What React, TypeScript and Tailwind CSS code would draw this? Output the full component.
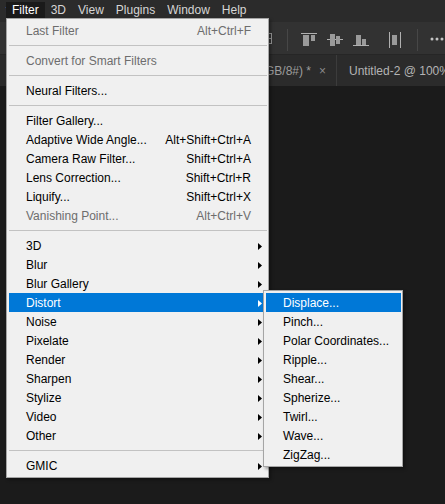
import React from "react";

type Row = {
  label: string;
  shortcut?: string;
  disabled?: boolean;
  sub?: boolean;
  active?: boolean;
};

type Entry = Row | "sep";

const filterMenu: Entry[] = [
  { label: "Last Filter", shortcut: "Alt+Ctrl+F", disabled: true },
  "sep",
  { label: "Convert for Smart Filters", disabled: true },
  "sep",
  { label: "Neural Filters..." },
  "sep",
  { label: "Filter Gallery..." },
  { label: "Adaptive Wide Angle...", shortcut: "Alt+Shift+Ctrl+A" },
  { label: "Camera Raw Filter...", shortcut: "Shift+Ctrl+A" },
  { label: "Lens Correction...", shortcut: "Shift+Ctrl+R" },
  { label: "Liquify...", shortcut: "Shift+Ctrl+X" },
  { label: "Vanishing Point...", shortcut: "Alt+Ctrl+V", disabled: true },
  "sep",
  { label: "3D", sub: true },
  { label: "Blur", sub: true },
  { label: "Blur Gallery", sub: true },
  { label: "Distort", sub: true, active: true },
  { label: "Noise", sub: true },
  { label: "Pixelate", sub: true },
  { label: "Render", sub: true },
  { label: "Sharpen", sub: true },
  { label: "Stylize", sub: true },
  { label: "Video", sub: true },
  { label: "Other", sub: true },
  "sep",
  { label: "GMIC", sub: true },
];

const distortMenu: Row[] = [
  { label: "Displace...", active: true },
  { label: "Pinch..." },
  { label: "Polar Coordinates..." },
  { label: "Ripple..." },
  { label: "Shear..." },
  { label: "Spherize..." },
  { label: "Twirl..." },
  { label: "Wave..." },
  { label: "ZigZag..." },
];

const menuBar = ["Filter", "3D", "View", "Plugins", "Window", "Help"];

function Arrow({ white }: { white?: boolean }) {
  return (
    <svg width="4" height="7" viewBox="0 0 4 7">
      <polygon points="0,0 4,3.5 0,7" fill={white ? "#ffffff" : "#000000"} />
    </svg>
  );
}

function MenuRow({ row, slot }: { row: Row; slot?: boolean }) {
  const color = row.active
    ? "bg-[#0078d7] text-white"
    : row.disabled
    ? "text-[#6d6d6d]"
    : "text-black";
  return (
    <div
      className={`h-[19px] ml-[2px] mr-[1px] pl-[17px] pt-[2px] flex items-start leading-[17px] whitespace-nowrap ${color}`}
    >
      <span className="flex-1">{row.label}</span>
      {row.shortcut && <span>{row.shortcut}</span>}
      {slot && (
        <span className="w-[16px] h-[17px] flex items-center pl-[7px]">
          {row.sub && <Arrow white={row.active} />}
        </span>
      )}
    </div>
  );
}

function Separator() {
  return (
    <div className="h-[11px] pt-[5px] ml-[2px] mr-[1px]">
      <div className="h-px bg-[#c2c2c2]" />
    </div>
  );
}

function AlignTop() {
  return (
    <svg width="16" height="16" viewBox="0 0 16 16" fill="#9a9a9a">
      <rect x="0" y="1" width="16" height="1" fill="#b0b0b0" />
      <rect x="2" y="3" width="6" height="11" />
      <rect x="10" y="3" width="4" height="6" />
    </svg>
  );
}

function AlignMiddle() {
  return (
    <svg width="16" height="16" viewBox="0 0 16 16" fill="#9a9a9a">
      <rect x="0" y="7" width="16" height="1" fill="#b0b0b0" />
      <rect x="3" y="2" width="5" height="12" />
      <rect x="9" y="4" width="4" height="8" />
    </svg>
  );
}

function AlignBottom() {
  return (
    <svg width="16" height="16" viewBox="0 0 16 16" fill="#9a9a9a">
      <rect x="0" y="13" width="16" height="1" fill="#b0b0b0" />
      <rect x="3" y="3" width="5" height="10" />
      <rect x="9" y="7" width="4" height="6" />
    </svg>
  );
}

function Distribute() {
  return (
    <svg width="14" height="16" viewBox="0 0 14 16" fill="#9a9a9a">
      <rect x="1" y="0" width="1" height="16" fill="#b0b0b0" />
      <rect x="12" y="0" width="1" height="16" fill="#b0b0b0" />
      <rect x="4" y="3" width="5" height="10" />
    </svg>
  );
}

function App() {
  return (
    <div className="relative w-[445px] h-[504px] overflow-hidden bg-[#1b1b1b] font-[Liberation_Sans,Arial,sans-serif] text-[12px]">
      {/* menu bar */}
      <div className="h-[22px] bg-[#2b2b2b] flex items-start text-[#d6d6d6]">
        <div className="w-[6px] h-[16px] mt-[2px] overflow-hidden flex justify-end pt-px leading-[15px]">
          <span className="-mr-[3px]">t</span>
        </div>
        {menuBar.map((m) => (
          <div
            key={m}
            className={`h-[16px] mt-[2px] pt-px px-[6px] leading-[15px] whitespace-nowrap ${
              m === "Filter" ? "bg-[#1a1a1a] text-white" : ""
            }`}
          >
            {m}
          </div>
        ))}
      </div>

      {/* options bar */}
      <div className="h-[33px] bg-[#323232] border-b border-[#262626] flex items-center pt-[3px]">
        <div className="w-[264px] shrink-0" />
        <svg width="10" height="16" viewBox="0 0 10 16" fill="#9a9a9a">
          <rect x="0" y="1" width="7" height="1" />
          <rect x="0" y="6" width="7" height="1" />
          <rect x="0" y="11" width="7" height="1" />
          <rect x="7" y="1" width="1" height="11" />
        </svg>
        <div className="ml-[13px] w-px h-[22px] bg-[#474747]" />
        <div className="ml-[13px]">
          <AlignTop />
        </div>
        <div className="ml-[10px]">
          <AlignMiddle />
        </div>
        <div className="ml-[10px]">
          <AlignBottom />
        </div>
        <div className="ml-[19px]">
          <Distribute />
        </div>
        <div className="ml-[15px] w-px h-[22px] bg-[#474747]" />
        <svg className="ml-[11px] shrink-0" width="16" height="16" viewBox="0 0 16 16" fill="#c4c4c4">
          <circle cx="3" cy="7" r="1.5" />
          <circle cx="8" cy="7" r="1.5" />
          <circle cx="13" cy="7" r="1.5" />
        </svg>
      </div>

      {/* document tabs */}
      <div className="h-[31px] bg-[#2b2b2b] flex items-stretch whitespace-nowrap">
        <div className="w-[337px] shrink-0 flex items-center justify-end pr-[10px] border-r border-[#3c3c3c] text-[#9c9c9c] overflow-hidden">
          <span className="shrink-0">Untitled-1 @ 66.7% (RGB/8#) *</span>
          <span className="ml-[8px] text-[#8a8a8a]">×</span>
        </div>
        <div className="pl-[12px] flex items-center text-[#b4b4b4]">
          Untitled-2 @ 100% (RGB/8#)
        </div>
      </div>

      {/* Filter menu */}
      <div className="absolute left-[6px] top-[18px] w-[263px] bg-[#f0f0f0] border border-[#a5a5a5] pt-[2px] pb-[2px] shadow-[2px_2px_3px_rgba(0,0,0,0.35)]">
        {filterMenu.map((e, i) =>
          e === "sep" ? <Separator key={i} /> : <MenuRow key={i} row={e} slot />
        )}
      </div>

      {/* Distort submenu */}
      <div className="absolute left-[263px] top-[290px] w-[140px] bg-[#f0f0f0] border border-[#a5a5a5] pt-[2px] pb-[2px] shadow-[2px_2px_3px_rgba(0,0,0,0.35)]">
        {distortMenu.map((r) => (
          <MenuRow key={r.label} row={r} />
        ))}
      </div>
    </div>
  );
}

export default App;
